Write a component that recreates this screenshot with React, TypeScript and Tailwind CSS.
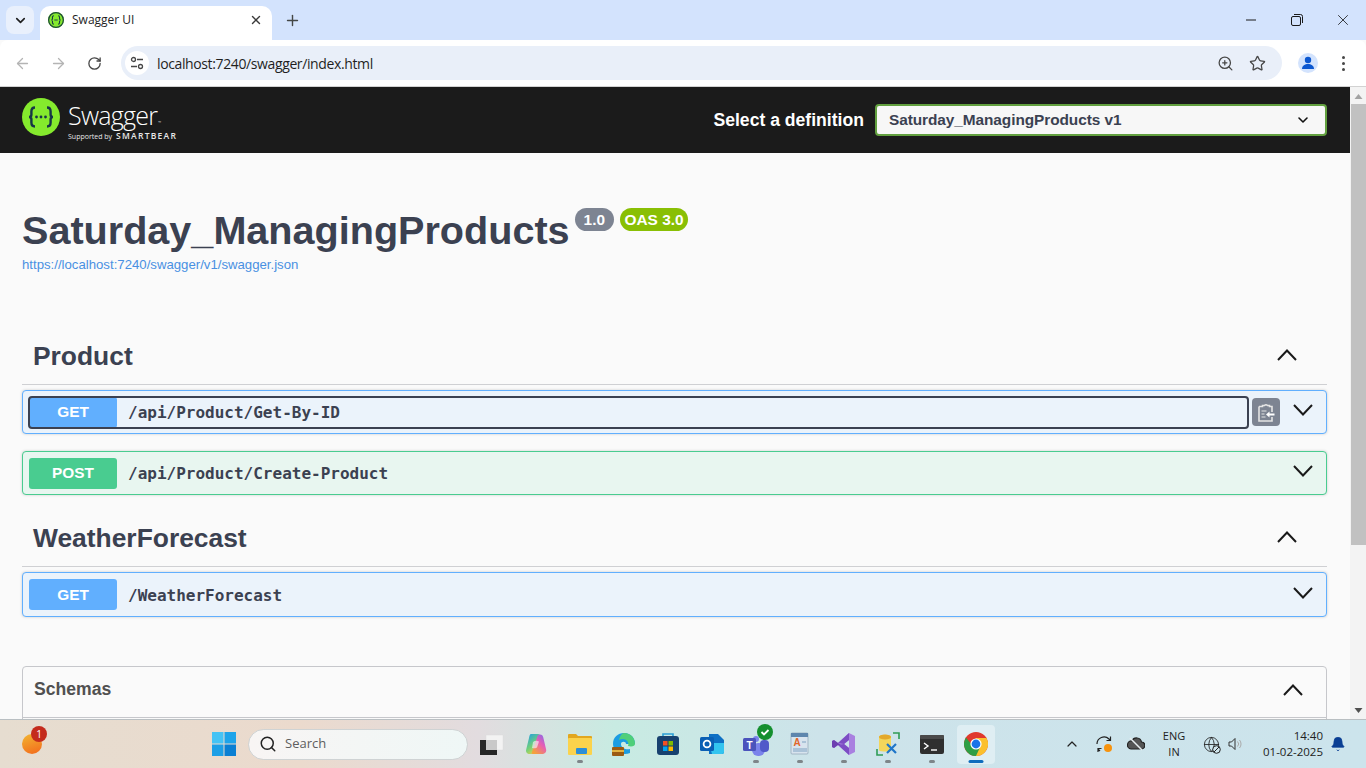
import React from "react";
import { ArrowLeft, ArrowRight, RotateCw, ZoomIn, Star, X, Plus, Search, ChevronDown, ChevronUp, Bell, Globe } from "lucide-react";

const sans = "font-['Liberation_Sans',Arial,sans-serif]";
const ui = "font-['Open_Sans','Noto_Sans',sans-serif]";

function SwaggerMark({ size, fav, className }: { size: number; fav?: boolean; className?: string }) {
  return (
    <svg width={size} height={size} viewBox="0 0 38 38" className={`shrink-0 ${className ?? ""}`}>
      <circle cx="19" cy="19" r="19" fill="#85ea2d" />
      {fav && <circle cx="19" cy="19" r="17.500" fill="none" stroke="#1d4a3a" strokeWidth="3" />}
      <path d={fav ? "M14 9c-3 0-3.500 1.500-3.500 4v3c0 1.800-.8 3-2.500 3 1.700 0 2.500 1.200 2.500 3v3c0 2.500.5 4 3.500 4M24 9c3 0 3.500 1.500 3.500 4v3c0 1.800.8 3 2.500 3-1.700 0-2.500 1.200-2.500 3v3c0 2.500-.5 4-3.500 4" : "M13 9.500c-3 0-3.600 1.600-3.600 4v3.200c0 1.600-.8 2.300-2.400 2.300 1.600 0 2.400.7 2.400 2.300v3.200c0 2.400.6 4 3.600 4M25 9.500c3 0 3.600 1.600 3.600 4v3.200c0 1.600.8 2.300 2.400 2.300-1.600 0-2.400.7-2.400 2.300v3.200c0 2.400-.6 4-3.600 4"} fill="none" stroke="#173647" strokeWidth={fav ? 2.6 : 2.4} />
      {fav ? <path d="M15 19h8" stroke="#173647" strokeWidth="2.200" /> : <g fill="#173647"><circle cx="14.500" cy="19" r="1.400" /><circle cx="19" cy="19" r="1.400" /><circle cx="23.500" cy="19" r="1.400" /></g>}
    </svg>
  );
}

function Chevron({ up, className }: { up?: boolean; className?: string }) {
  return (
    <svg width="20" height="12" viewBox="0 0 20 12" className={className}>
      <polyline points={up ? "1,11 10,1.5 19,11" : "1,1 10,10.5 19,1"} fill="none" stroke="#1a1a1a" strokeWidth="2" />
    </svg>
  );
}

function Op({ method, path, focus, copy, tall }: { method: string; path: string; focus?: boolean; copy?: boolean; tall?: boolean }) {
  const get = method === "GET";
  return (
    <div className={`flex items-center rounded-[4px] border pl-[6px] pr-[13px] shadow-[0_0_3px_rgba(0,0,0,0.19)] ${tall ? "h-[45px]" : "h-[44px]"} ${get ? "border-[#61affe] bg-[#ebf3fb]" : "border-[#49cc90] bg-[#e8f6f0]"}`}>
      <div className={`flex h-[31px] flex-1 items-center rounded-[3px] ${focus ? "outline-2 -outline-offset-1 outline-[#3b4151]" : ""}`}>
        <div className={`flex h-[31px] w-[88px] items-center justify-center rounded-[3px] ${sans} text-[15.4px] font-bold text-white ${get ? "bg-[#61affe]" : "bg-[#49cc90]"}`}>{method}</div>
        <div className="ml-[11px] mt-[2px] font-['DejaVu_Sans_Mono',monospace] text-[16px] font-bold text-[#3b4151]">{path}</div>
      </div>
      {copy && (
        <div className="ml-[4px] flex h-[28px] w-[28px] items-center justify-center rounded-[4px] bg-[#7d8492]">
          <svg width="17" height="19" viewBox="0 0 17 19">
            <path d="M1 3.500h3.500V2.500h2a2 2 0 0 1 3 0h2v1H14v5.500M14 14v4H1V3.500" fill="none" stroke="#e4e4e4" strokeWidth="1.600" />
            <path d="M3.500 8h5M3.500 11h3M3.500 14h4" stroke="#e4e4e4" strokeWidth="1.200" />
            <path d="M8 11.500l3.500-3v2h5v2h-5v2z" fill="#fff" />
          </svg>
        </div>
      )}
      <Chevron className="ml-[13px] mb-[4px]" />
    </div>
  );
}

function Tag({ name, className }: { name: string; className?: string }) {
  return (
    <div className={`flex items-center justify-between border-b border-[#cfd0d3] pr-[30px] ${className ?? ""}`}>
      <div className={`${sans} mb-[4px] pl-[11px] text-[26.4px] font-bold text-[#3b4151]`}>{name}</div>
      <Chevron up className="mb-[8px]" />
    </div>
  );
}

function Slot({ children, dot, active }: { children?: React.ReactNode; dot?: boolean; active?: boolean }) {
  return (
    <div className="relative flex h-[40px] w-[44px] items-center justify-center">
      {active && <span className="absolute inset-x-[3px] top-[1px] bottom-0 rounded-[4px] bg-[#dfeef3]" />}
      <span className="relative flex items-center justify-center">{children}</span>
      {dot && <span className="absolute bottom-[1px] left-1/2 h-[3px] w-[6px] -translate-x-1/2 rounded-full bg-[#7e8589]" />}
      {active && <span className="absolute bottom-[1px] left-1/2 h-[3px] w-[15px] -translate-x-1/2 rounded-full bg-[#0f6cbd]" />}
    </div>
  );
}

function TaskIcons() {
  return (
    <div className="ml-[2px] flex items-center">
      <Slot>
        <svg width="24" height="24" viewBox="0 0 24 24"><rect x="6" y="3" width="17" height="15" fill="#f3f3f3" stroke="#dcdcdc" strokeWidth=".5" /><rect x="0" y="8" width="17" height="15" fill="#262626" /><rect x="6" y="8" width="11" height="10" fill="#c9c9c9" /></svg>
      </Slot>
      <Slot>
        <svg width="24" height="24" viewBox="0 0 24 24">
          <defs>
            <linearGradient id="cpa" x1="0" y1="0" x2="0.6" y2="1"><stop offset="0" stopColor="#1f9be8" /><stop offset=".6" stopColor="#6fd07a" /><stop offset="1" stopColor="#e8d24a" /></linearGradient>
            <linearGradient id="cpb" x1="1" y1="0" x2="0.3" y2="1"><stop offset="0" stopColor="#7a6bf0" /><stop offset=".5" stopColor="#e85fb4" /><stop offset="1" stopColor="#f5a13c" /></linearGradient>
          </defs>
          <path d="M7 2h7c1.500 0 2 1 2.500 2.500L14 12l-2.500 8c-.5 1.500-1.500 2-3 2H6c-3 0-4.500-2-3.800-4.500L5 6c.5-2.500 1-4 2-4z" fill="url(#cpa)" />
          <path d="M15 22H9c-1.500 0-1.500-1-1-2l3-8 2.500-8c.5-1 1-1.500 2.500-1.500 2 0 2.800 1 3.300 3L22 17c1 3-1.500 5-4 5z" fill="url(#cpb)" />
          <path d="M9 10c2-1.500 4-1.500 6-.5l-2 6c-2 1-3.500 1-5 .5z" fill="#f6eefa" opacity=".65" />
        </svg>
      </Slot>
      <Slot dot>
        <svg width="24" height="22" viewBox="0 0 24 22"><path d="M0 2a1 1 0 0 1 1-1h7l2 2h13a1 1 0 0 1 1 1v3H0z" fill="#e2a71f" /><rect x="0" y="5" width="24" height="17" rx="1" fill="#fbd34c" /><rect x="8" y="15" width="11" height="6" rx="1" fill="#2b8fd8" /></svg>
      </Slot>
      <Slot>
        <svg width="24" height="24" viewBox="0 0 24 24"><path d="M1 12C1 5 6 1 12 1c7 0 11 5 11 11h-9c0-3-5-3-5 0 0 4 5 6 9 5v4c-7 3-17-1-17-9z" fill="#1b9de2" /><path d="M12 1c7 0 11 5 11 11 0 2-3 3-7 2 2-5-4-9-9-6 1-4 3-7 5-7z" fill="#4fcf7a" /><rect x="0" y="15" width="12" height="9" rx="1" fill="#9a5b13" /><rect x="0" y="18" width="12" height="2" fill="#e3b341" /></svg>
      </Slot>
      <Slot>
        <svg width="24" height="24" viewBox="0 0 24 24"><path d="M7 5V2h10v3" fill="none" stroke="#2a9fd6" strokeWidth="1.600" /><rect x="1" y="4" width="22" height="19" rx="3" fill="#17416f" /><rect x="7" y="9" width="4.500" height="4.500" fill="#f25022" /><rect x="12.500" y="9" width="4.500" height="4.500" fill="#7fba00" /><rect x="7" y="14.500" width="4.500" height="4.500" fill="#00a4ef" /><rect x="12.500" y="14.500" width="4.500" height="4.500" fill="#ffb900" /></svg>
      </Slot>
      <Slot>
        <svg width="24" height="24" viewBox="0 0 24 24"><path d="M9 2h9l6 6v12a2 2 0 0 1-2 2H9z" fill="#0e70c4" /><path d="M9 11h15v9a2 2 0 0 1-2 2H12z" fill="#33c4ef" /><rect x="0" y="5" width="14" height="14" rx="1.500" fill="#0a5fb4" /><circle cx="7" cy="12" r="3.400" fill="none" stroke="#fff" strokeWidth="1.800" /></svg>
      </Slot>
      <Slot dot>
        <svg width="34" height="30" viewBox="0 0 34 30" className="overflow-visible"><circle cx="17" cy="10" r="3" fill="#7b83eb" /><rect x="13" y="14" width="13" height="13" rx="6" fill="#7b83eb" /><rect x="21" y="11" width="9" height="12" rx="4" fill="#5059c9" /><rect x="4" y="9" width="13" height="13" rx="1.500" fill="#4b53bc" /><text x="10.500" y="19.500" textAnchor="middle" fontSize="10" fontWeight="700" fill="#fff" fontFamily="Liberation Sans">T</text><circle cx="26" cy="3" r="8" fill="#148f2e" /><path d="M22.500 3l2.500 2.500 4.500-4.500" fill="none" stroke="#fff" strokeWidth="1.800" /></svg>
      </Slot>
      <Slot dot>
        <svg width="22" height="24" viewBox="0 0 22 24"><rect x="2" y="1" width="17" height="21" rx="1" fill="#d8e4ee" stroke="#8fa3b6" strokeWidth=".7" /><rect x="2" y="1" width="17" height="4" fill="#5e86ad" /><text x="8" y="14" textAnchor="middle" fontSize="10" fontWeight="700" fill="#e2662a" fontFamily="Liberation Sans">A</text><path d="M13 10h4M4 17h14M4 19h14" stroke="#7fa2c2" strokeWidth="1" /></svg>
      </Slot>
      <Slot dot>
        <svg width="24" height="24" viewBox="0 0 24 24"><path d="M17 1l6 3v16l-6 3L6 13 2 16 0 15V9l2-1 4 3zM17 8l-5 4 5 4z" fill="#a980e0" /><path d="M0 9l2-1 4 3 3 2-3 0-4 3-2-1z" fill="#6c3fb0" /><path d="M6 11L17 1v7l-5 4z" fill="#7c4dc4" /><path d="M6 13l11 10v-7l-5-4z" fill="#7c4dc4" /></svg>
      </Slot>
      <Slot dot>
        <svg width="24" height="24" viewBox="0 0 24 24"><path d="M3 5c0-3 12-3 12 0v13c0 2-12 2-12 0z" fill="#f3d65b" /><ellipse cx="9" cy="5" rx="6" ry="2.500" fill="#e3a92c" /><path d="M17 1h6v6M1 17v6h6" fill="none" stroke="#2f9c55" strokeWidth="1.600" /><path d="M11 21l9-9M11 12l9 9" stroke="#1f76c9" strokeWidth="2.200" /></svg>
      </Slot>
      <Slot dot>
        <svg width="24" height="19" viewBox="0 0 24 19"><rect width="24" height="19" rx="2" fill="#2f2f2f" /><rect width="24" height="4" rx="1" fill="#4a4a4a" /><path d="M4 8l4 3-4 3" fill="none" stroke="#fff" strokeWidth="1.400" /><path d="M11 15h6" stroke="#fff" strokeWidth="1.400" /></svg>
      </Slot>
      <Slot active>
        <svg width="24" height="24" viewBox="0 0 24 24"><circle cx="12" cy="12" r="12" fill="#e0392d" /><path d="M12 24a12 12 0 0 0 10.400-18H12l-4 7z" fill="#fbc02d" /><path d="M12 24l5-11-9 0-6-7.500A12 12 0 0 0 12 24z" fill="#2f9e44" /><circle cx="12" cy="12" r="5.600" fill="#fff" /><circle cx="12" cy="12" r="4.400" fill="#1a73e8" /></svg>
      </Slot>
    </div>
  );
}

export default function App() {
  return (
    <div className="flex h-screen w-full flex-col overflow-hidden bg-[#fafafa]">
      {/* tab strip */}
      <div className={`flex h-[40px] shrink-0 items-end bg-[#d3e3fd] ${ui}`}>
        <div className="mb-[6px] ml-[6px] flex h-[28px] w-[28px] items-center justify-center rounded-[8px] bg-[#e9f0fc]">
          <ChevronDown size={15} strokeWidth={2.600} className="text-[#1f1f1f]" />
        </div>
        <div className="ml-[6px] flex h-[34px] w-[232px] items-center rounded-t-[10px] bg-white pb-[6px] pl-[8px]">
          <SwaggerMark size={16} fav />
          <span className="ml-[8px] text-[12px] text-[#1f1f1f]">Swagger UI</span>
          <X size={14} strokeWidth={2.400} className="ml-auto mr-[9px] text-[#3a3a3a]" />
        </div>
        <Plus size={17} strokeWidth={2} className="mb-[11px] ml-[12px] text-[#444746]" />
        <div className="mb-[11px] ml-auto flex items-center">
          <svg width="10" height="2" viewBox="0 0 10 2" className="mr-[35px]"><path d="M0 1h10" stroke="#1a1a1a" strokeWidth="1" /></svg>
          <svg width="12" height="12" viewBox="0 0 12 12" className="mr-[31px]"><rect x=".5" y="2.500" width="9" height="9" rx="1.500" fill="none" stroke="#1a1a1a" /><path d="M3 .5h6.500a2 2 0 0 1 2 2V9" fill="none" stroke="#1a1a1a" /></svg>
          <X size={18} strokeWidth={1.100} className="mr-[14px] text-[#1a1a1a]" />
        </div>
      </div>

      {/* toolbar */}
      <div className={`flex h-[47px] shrink-0 items-center rounded-t-[8px] border-b border-[#d2d2d2] bg-white ${ui}`}>
        <ArrowLeft size={17} strokeWidth={1.800} className="ml-[14px] text-[#b4b4b4]" />
        <ArrowRight size={17} strokeWidth={1.800} className="ml-[19px] text-[#b4b4b4]" />
        <RotateCw size={15} strokeWidth={2.100} className="ml-[20px] text-[#474747]" />
        <div className="ml-[19px] flex h-[34px] w-[1161px] items-center rounded-full bg-[#e9eff9] pl-[4px] pr-[16px]">
          <div className="flex h-[24px] w-[24px] items-center justify-center rounded-full bg-white">
            <svg width="14" height="14" viewBox="0 0 14 14" fill="none" stroke="#474747" strokeWidth="1.300"><circle cx="3.500" cy="3.500" r="2" /><path d="M7 3.500h6M1 10.500h6" /><circle cx="10.500" cy="10.500" r="2" /></svg>
          </div>
          <span className="ml-[8px] text-[14px] tracking-[-0.38px] text-[#1f1f1f]">
            localhost:7240/swagger/index.html
          </span>
          <ZoomIn size={17} strokeWidth={1.800} className="ml-auto text-[#474747]" />
          <Star size={17} strokeWidth={1.800} className="ml-[15px] text-[#474747]" />
        </div>
        <div className="ml-[16px] flex h-[20px] w-[20px] items-center justify-center rounded-full bg-[#d3e3fd]">
          <svg width="14" height="14" viewBox="0 0 14 14" fill="#0b57d0"><circle cx="7" cy="4" r="3.200" /><path d="M1 13c0-3.500 3-5 6-5s6 1.500 6 5z" /></svg>
        </div>
        <div className="ml-[24px] flex flex-col gap-[3px]">
          <span className="h-[3px] w-[3px] rounded-full bg-[#474747]" />
          <span className="h-[3px] w-[3px] rounded-full bg-[#474747]" />
          <span className="h-[3px] w-[3px] rounded-full bg-[#474747]" />
        </div>
      </div>

      {/* viewport */}
      <div className="flex min-h-0 flex-1">
        <div className="min-w-0 flex-1 overflow-hidden">
          <header className="flex h-[66px] items-center bg-[#1b1b1b] pl-[22px] pr-[23px]">
            <SwaggerMark size={38} className="mb-[6px]" />
            <div className={`ml-[8px] mt-[4px] flex flex-col text-white ${ui}`}>
              <span className="flex items-end text-[25px] leading-[25px] font-light tracking-[-0.75px]">
                Swagger<span className="mb-[3px] ml-[1px] text-[4px] leading-[4px] tracking-normal">™</span>
              </span>
              <span className="mt-[3px] flex items-baseline text-[7px] leading-[9px] text-[#e8e8e8]">
                Supported by<span className="ml-[4px] text-[8.500px] font-semibold tracking-[1.250px]">SMARTBEAR</span>
              </span>
            </div>
            <span className={`ml-auto ${sans} text-[17.6px] font-bold text-white`}>Select a definition</span>
            <div className={`ml-[11px] flex h-[32px] w-[452px] items-center justify-between rounded-[4px] border-2 border-[#62a03f] bg-[#f7f7f7] pl-[12px] pr-[14px] ${sans} text-[15.4px] font-bold tracking-[-0.07px] text-[#3b4151]`}>
              Saturday_ManagingProducts v1
              <ChevronDown size={16} strokeWidth={2.400} className="text-[#111]" />
            </div>
          </header>

          <div className="pl-[22px] pr-[23px]">
            <div className="mt-[53px] flex items-start">
              <h1 className={`${sans} text-[39.6px] leading-[48px] font-bold text-[#3b4151]`}>Saturday_ManagingProducts</h1>
              <span className={`ml-[5px] mt-[2px] rounded-full bg-[#7d8492] px-[9px] text-[15.4px] leading-[23px] font-bold text-white ${sans}`}>1.0</span>
              <span className={`ml-[6px] mt-[2px] rounded-full bg-[#89bf04] px-[4.500px] text-[15.4px] leading-[23px] font-bold text-white ${sans}`}>OAS 3.0</span>
            </div>
            <div className={`${sans} mt-[3px] text-[13.2px] leading-[16px] text-[#4990e2]`}>https://localhost:7240/swagger/v1/swagger.json</div>

            <Tag name="Product" className="mt-[61px] h-[51px]" />
            <div className="mt-[5px]"><Op method="GET" path="/api/Product/Get-By-ID" focus copy /></div>
            <div className="mt-[17px]"><Op method="POST" path="/api/Product/Create-Product" /></div>
            <Tag name="WeatherForecast" className="mt-[20px] h-[52px]" />
            <div className="mt-[5px]"><Op method="GET" path="/WeatherForecast" tall /></div>

            <div className="mt-[49px] h-[120px] rounded-[4px] border border-[#c6c7cb]">
              <div className="flex h-[51px] items-center justify-between border-b border-[#c6c7cb] pl-[11px] pr-[23px]">
                <span className={`${sans} mb-[6px] text-[17.6px] font-bold text-[#505050]`}>Schemas</span>
                <Chevron up className="mb-[5px]" />
              </div>
            </div>
          </div>
        </div>
        <div className="flex w-[16px] shrink-0 flex-col items-center bg-[#f3f3f3]">
          <svg width="9" height="5" viewBox="0 0 9 5" className="mt-[7px] shrink-0"><path d="M.5 5L4.500 0l4 5z" fill="#a3a3a3" /></svg>
          <div className="mt-[5px] h-[441px] w-[15px] shrink-0 bg-[#c1c1c1]" />
          <svg width="9" height="5" viewBox="0 0 9 5" className="mb-[6px] mt-auto shrink-0"><path d="M.5 0L4.500 5l4-5z" fill="#505050" /></svg>
        </div>
      </div>

      {/* taskbar */}
      <div className={`flex h-[49px] shrink-0 items-center border-t border-[#b9bfc2] bg-[linear-gradient(90deg,#e6ddd0_0%,#ebdacd_22%,#e2dcdf_35%,#c8ebe2_45%,#cde3ea_60%,#cce4ec_100%)] ${ui}`}>
        <div className="relative ml-[22px] h-[20px] w-[20px] rounded-full bg-[linear-gradient(160deg,#f2b632,#f3681b)]">
          <span className="absolute -right-[5px] -top-[8px] flex h-[16px] w-[16px] items-center justify-center rounded-full bg-[#c42b1c] text-[10px] text-white">1</span>
        </div>
        <svg width="24" height="24" viewBox="0 0 24 24" className="ml-[170px]">
          <rect x="0" y="0" width="11.500" height="11.500" fill="#45c3f5" /><rect x="12.500" y="0" width="11.500" height="11.500" fill="#1ea4ea" /><rect x="0" y="12.500" width="11.500" height="11.500" fill="#1d9fe6" /><rect x="12.500" y="12.500" width="11.500" height="11.500" fill="#0a7fd3" />
        </svg>
        <div className="ml-[12px] flex h-[31px] w-[220px] items-center rounded-full border border-[#cfd3d4] bg-[linear-gradient(90deg,#f8f5f4,#eff7f6)] pl-[10px]">
          <Search size={18} strokeWidth={2} className="text-[#222]" />
          <span className="ml-[8px] text-[13px] text-[#5e5e5e]">Search</span>
        </div>
        <TaskIcons />
        <div className="ml-[66px] flex items-center">
          <ChevronUp size={16} strokeWidth={1.800} className="text-[#222]" />
          <svg width="18" height="18" viewBox="0 0 18 18" className="ml-[15px]" fill="none" stroke="#222" strokeWidth="1.200"><path d="M2 9a7 7 0 0 1 12-5l1.500 1.500M15.500 1.500v4h-4M5 16l-2-2M3 17v-3.500h3.500" /><circle cx="13" cy="13" r="4" fill="#f7930e" stroke="none" /></svg>
          <svg width="18" height="14" viewBox="0 0 18 14" className="ml-[14px]"><path d="M4 12h10a3.500 3.500 0 0 0 .5-7 5 5 0 0 0-9.500-1 4 4 0 0 0-1 8z" fill="#555" stroke="#222" strokeWidth="1.200" /><path d="M3 1l12 12" stroke="#e8eef0" strokeWidth="1.500" /></svg>
          <div className="ml-[9px] flex w-[40px] flex-col items-center text-[11px] leading-[16px] text-[#222]"><span>ENG</span><span>IN</span></div>
          <span className="relative ml-[9px] flex">
            <Globe size={17} strokeWidth={1.200} className="text-[#222]" />
            <svg width="9" height="9" viewBox="0 0 9 9" className="absolute -bottom-[1px] -right-[1px]"><circle cx="4.500" cy="4.500" r="3.800" fill="#cfe5ec" stroke="#222" /><path d="M2 7l5-5" stroke="#222" /></svg>
          </span>
          <svg width="18" height="14" viewBox="0 0 18 14" className="ml-[8px]" fill="none" stroke="#333" strokeWidth="1"><path d="M1 5h2.500L7 1.500v11L3.500 9H1z" /><path d="M9.500 4.500a3.500 3.500 0 0 1 0 5M11.500 3a6 6 0 0 1 0 8" stroke="#aaa" /></svg>
          <div className="ml-[13px] flex w-[64px] flex-col items-end text-[11.500px] leading-[16px] text-[#222]"><span>14:40</span><span className="whitespace-nowrap">01-02-2025</span></div>
          <Bell size={16} fill="#0a3f94" strokeWidth={1} className="ml-[7px] text-[#0a3f94]" />
        </div>
      </div>
    </div>
  );
}
